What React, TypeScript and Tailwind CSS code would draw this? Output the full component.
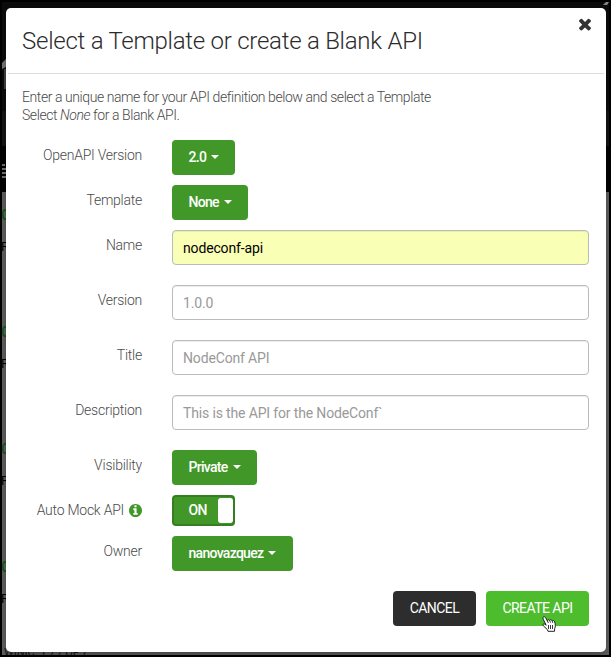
import type { ReactNode } from "react";

const glyphRows = [206, 323, 440, 558];

function Caret() {
  return (
    <span className="relative -top-px ml-[5px] inline-block border-x-4 border-t-4 border-x-transparent border-t-white align-middle" />
  );
}

function Dropdown({ children, width }: { children: ReactNode; width: string }) {
  return (
    <button
      className={`h-[35px] ${width} rounded-[4px] bg-[#419828] pl-[16.5px] text-left text-[14px] font-medium tracking-[-0.7px] leading-[35px] whitespace-nowrap text-white`}
    >
      {children}
      <Caret />
    </button>
  );
}

function Row({ label, children, gap }: { label: ReactNode; children: ReactNode; gap: string }) {
  return (
    <div className={`flex ${gap}`}>
      <div className="w-[120px] pt-[6px] text-right leading-[18px] tracking-[-0.25px]">{label}</div>
      <div className="ml-[30px] flex w-[417px]">{children}</div>
    </div>
  );
}

function Field({ value, placeholder }: { value?: string; placeholder?: string }) {
  return (
    <input
      defaultValue={value}
      placeholder={placeholder}
      className={`h-[35px] w-full rounded-[4px] border border-[#bbb] px-[10px] pt-[1px] text-[14px] font-normal tracking-[-0.15px] shadow-[inset_0_1px_1px_rgba(0,0,0,0.075)] outline-none placeholder:text-[#999] ${
        value ? "bg-[#f9ffb5] text-black" : "bg-white"
      }`}
    />
  );
}

function CloseIcon() {
  return (
    <svg viewBox="0 0 1792 1792" className="size-[18px]" fill="#333">
      <path d="M1490 1322q0 40-28 68l-136 136q-28 28-68 28t-68-28l-294-294-294 294q-28 28-68 28t-68-28l-136-136q-28-28-28-68t28-68l294-294-294-294q-28-28-28-68t28-68l136-136q28-28 68-28t68 28l294 294 294-294q28-28 68-28t68 28l136 136q28 28 28 68t-28 68l-294 294 294 294q28 28 28 68z" />
    </svg>
  );
}

function InfoIcon() {
  return (
    <svg viewBox="128 128 1536 1536" className="ml-[5px] inline-block size-[13px] align-[-2px]" fill="#419828">
      <path d="M1152 1376v-160q0-14-9-23t-23-9h-96v-512q0-14-9-23t-23-9h-320q-14 0-23 9t-9 23v160q0 14 9 23t23 9h96v320h-96q-14 0-23 9t-9 23v160q0 14 9 23t23 9h448q14 0 23-9t9-23zm-128-896v-160q0-14-9-23t-23-9h-192q-14 0-23 9t-9 23v160q0 14 9 23t23 9h192q14 0 23-9t9-23zm640 416q0 209-103 385.5t-279.5 279.5-385.5 103-385.5-103-279.5-279.5-103-385.5 103-385.5 279.5-279.5 385.5-103 385.5 103 279.5 279.5 103 385.5z" />
    </svg>
  );
}

function HandCursor() {
  return (
    <svg viewBox="0 0 14 16" className="absolute top-[25px] left-[56px] h-[16px] w-[14px]">
      <path
        d="M1.2 1.2C2 .3 3.2.7 3.7 1.8L5.4 5C5.300 3.600 7 3.300 7.700 4.500C8.200 3.300 9.700 3.500 10.200 4.900C11 4 12.300 4.500 12.700 6C13.500 8.500 13.600 10.500 12.700 12.500L12.500 15.300H6L5.300 13.500L1.300 9.800C.2 8.500 1.500 7.300 2.800 8.200L4.200 9.200L1.100 3C.8 2.300.7 1.700 1.200 1.200Z"
        fill="#fff"
        stroke="#222"
        strokeWidth="1"
        strokeLinejoin="round"
      />
      <path d="M6.500 9v4M8.500 9v4M10.500 9v4M5.400 5l1 2M7.700 4.600l.8 2M10.200 5l.6 1.900" stroke="#222" strokeWidth=".9" fill="none" />
    </svg>
  );
}

function Backdrop() {
  return (
    <div className="absolute inset-0 overflow-hidden bg-[#616161]">
      <div className="h-[190px] bg-[#030303]">
        <div className="h-[109px] bg-[#0c0c0c]" />
        <div className="h-[35px] bg-[#151515]" />
      </div>
      <svg viewBox="0 0 4 32" className="absolute top-[55px] left-0 h-[32px] w-[4px]">
        <path d="M0 6L4 2V10L0 12Z" fill="#777" />
        <path d="M2 12H4V32H2Z" fill="#444" />
      </svg>
      <svg viewBox="0 0 4 14" className="absolute top-[162px] left-0 h-[14px] w-[4px]">
        <path d="M0 1H3M0 5H4M0 9H4M0 13H4" stroke="#999" strokeWidth="1.500" />
      </svg>
      <svg viewBox="0 0 6 4" className="absolute top-0 right-0 h-[4px] w-[6px]">
        <path d="M0 3L3 0H6L4 3Z" fill="#888" />
      </svg>
      {glyphRows.map((top) => (
        <div key={top} className="absolute left-0" style={{ top }}>
          <div className="-ml-px text-[14px] leading-[14px] font-medium text-[#0f5c0c]">C</div>
          <div className="-ml-px mt-[18px] text-[13px] leading-[13px] font-normal text-black">R</div>
        </div>
      ))}
      <div className="absolute top-[645px] left-[2px] text-[11px] leading-[12px] font-normal text-[#151515]">
        WINIC: 1 7 / OF 7
      </div>
    </div>
  );
}

export default function App() {
  return (
    <div
      className="relative h-[657px] w-[611px] overflow-hidden border-2 border-black text-[14px] font-light text-[#4a4a4a]"
      style={{ fontFamily: 'Roboto, "Liberation Sans", sans-serif' }}
    >
      <Backdrop />
      <div className="relative mt-[6px] ml-[4px] h-[644px] w-[600px] rounded-[5px] bg-white shadow-[0_3px_9px_rgba(0,0,0,0.3)]">
        <div className="mx-[2px] flex h-[66px] justify-between border-b border-[#ddd] pl-[14px]">
          <h1 className="pt-[17px] text-[24px] leading-[32px] font-light tracking-[-0.25px] text-[#2b2b2b]">
            Select a Template or create a Blank API
          </h1>
          <button className="mt-[7px] mr-[10px] size-[18px]">
            <CloseIcon />
          </button>
        </div>
        <p className="ml-[16px] pt-[14px] text-[14px] leading-[18px] tracking-[-0.43px]">
          Enter a unique name for your API definition below and select a Template
          <br />
          Select <em>None</em> for a Blank API.
        </p>
        <div className="ml-[16px] pt-[16px]">
          <Row label="OpenAPI Version" gap="mb-[10px]">
            <Dropdown width="w-[63px]">2.0</Dropdown>
          </Row>
          <Row label="Template" gap="mb-[10px]">
            <Dropdown width="w-[76px]">None</Dropdown>
          </Row>
          <Row label="Name" gap="mb-[20px]">
            <Field value="nodeconf-api" />
          </Row>
          <Row label="Version" gap="mb-[20px]">
            <Field placeholder="1.0.0" />
          </Row>
          <Row label="Title" gap="mb-[20px]">
            <Field placeholder="NodeConf API" />
          </Row>
          <Row label="Description" gap="mb-[20px]">
            <Field placeholder="This is the API for the NodeConf`" />
          </Row>
          <Row label="Visibility" gap="mb-[10px]">
            <Dropdown width="w-[85px]">Private</Dropdown>
          </Row>
          <Row
            gap="mb-[10px]"
            label={
              <>
                Auto Mock API
                <InfoIcon />
              </>
            }
          >
            <button className="flex h-[31px] w-[63px] items-center justify-between rounded-[4px] border-2 border-[#367f21] bg-[#419828] pl-[14.5px] text-[14px] font-medium tracking-[-0.7px] text-white">
              ON
              <span className="h-[25px] w-[15px] rounded-[3px] bg-white" />
            </button>
          </Row>
          <Row label="Owner" gap="mb-[20px]">
            <Dropdown width="w-[121px]">nanovazquez</Dropdown>
          </Row>
        </div>
        <div className="mr-[17px] flex justify-end gap-[10px] text-[14px] leading-[35px] font-normal tracking-[-0.55px] text-white">
          <button className="h-[35px] w-[83px] rounded-[4px] bg-[#2d2d2d]">CANCEL</button>
          <button className="relative h-[35px] w-[103px] rounded-[4px] bg-[#4dbd2e]">
            CREATE API
            <HandCursor />
          </button>
        </div>
      </div>
    </div>
  );
}
